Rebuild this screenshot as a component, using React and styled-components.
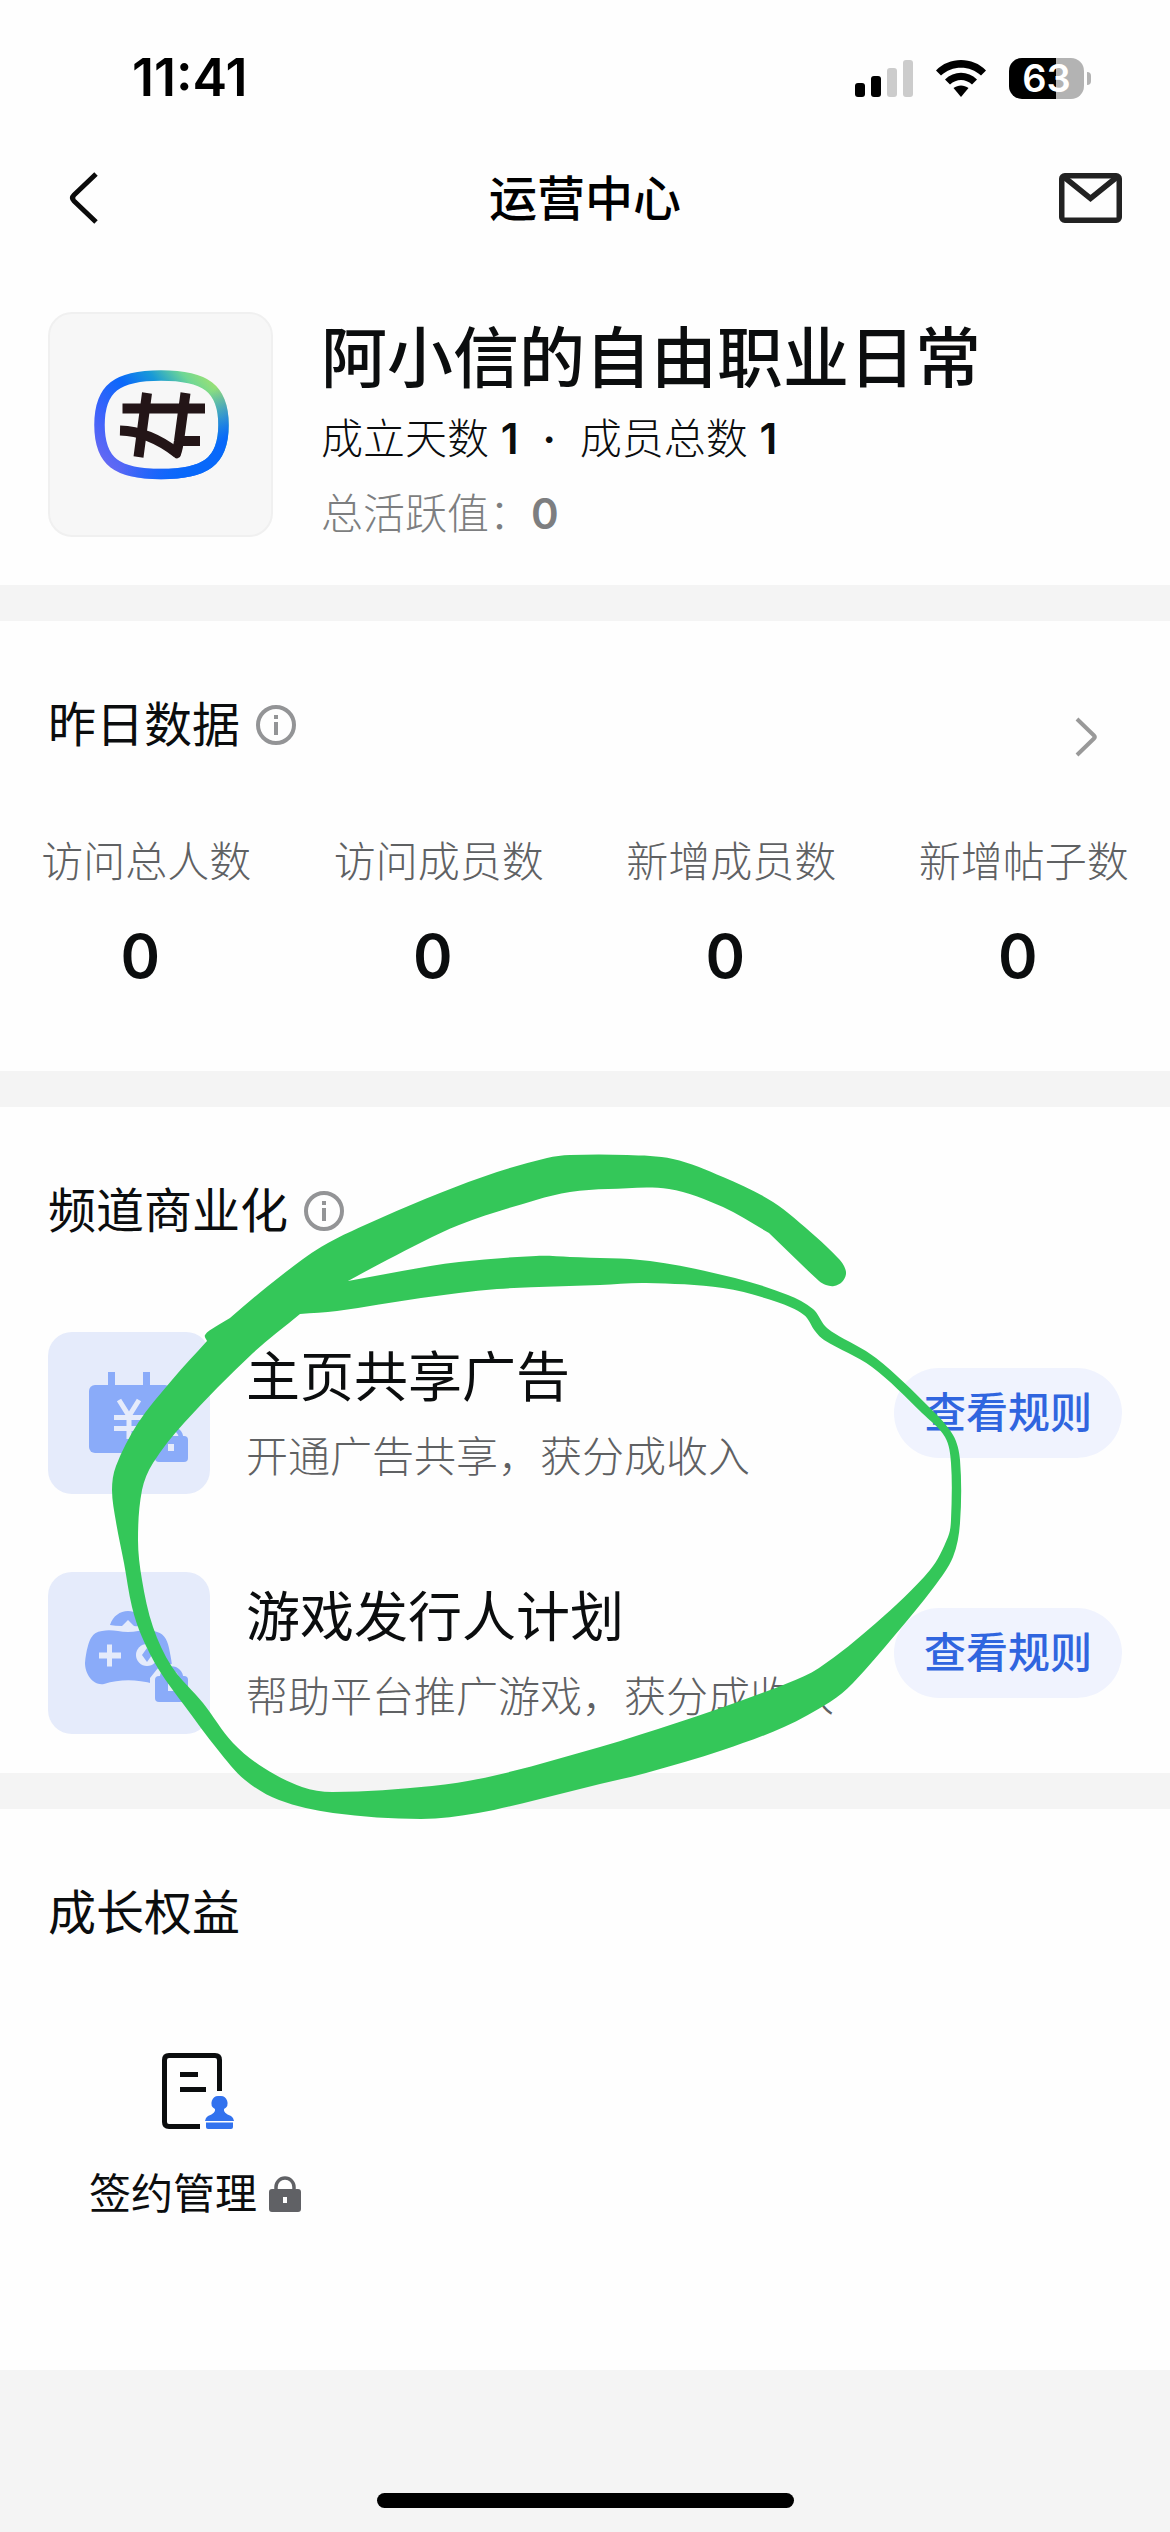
import React from "react";
import styled, { createGlobalStyle } from "styled-components";

const GlobalStyle = createGlobalStyle`
  *, *::before, *::after { box-sizing: border-box; }
  body {
    margin: 0;
    background: #fefefe;
    color: #0b0d0e;
    font-family: Inter, "Noto Sans CJK SC", sans-serif;
  }
  h1, h2, h3, p, dl, dt, dd, ul { margin: 0; padding: 0; font-weight: inherit; }
  ul { list-style: none; }
  svg { display: block; flex: none; }
  button { border: 0; padding: 0; background: none; font: inherit; color: inherit; cursor: pointer; }
`;

const Page = styled.div`
  display: flex;
  flex-direction: column;
  min-height: 100vh;
`;

const StatusBar = styled.div`
  display: flex;
  align-items: center;
  justify-content: space-between;
  height: 156px;
  padding: 0 79px 0 132px;
`;

const Clock = styled.time`
  font-size: 52px;
  line-height: 60px;
  font-weight: 600;
  color: #000;
`;

const StatusIcons = styled.div`
  display: flex;
  align-items: center;
  gap: 23px;
`;

const Battery = styled.div`
  display: flex;
  align-items: center;
  gap: 3px;
`;

const BatteryBody = styled.div`
  width: 75px;
  height: 41px;
  border-radius: 13px;
  background: linear-gradient(to right, #000 63%, #b3b3b3 63%);
  color: #fff;
  font-size: 38px;
  line-height: 41px;
  font-weight: 600;
  text-align: center;
`;

const BatteryNub = styled.span`
  width: 4px;
  height: 13px;
  border-radius: 0 4px 4px 0;
  background: #b3b3b3;
`;

const NavBar = styled.header`
  display: grid;
  grid-template-columns: 1fr auto 1fr;
  align-items: center;
  height: 86px;
  padding: 0 48px;
`;

const NavTitle = styled.h1`
  font-size: 48px;
  line-height: 60px;
  font-weight: 500;
  color: #000;
`;

const NavButton = styled.button`
  justify-self: ${(p) => (p.$end ? "end" : "start")};
`;

const Profile = styled.section`
  display: flex;
  gap: 48px;
  padding: 70px 48px 47px;
`;

const Avatar = styled.div`
  display: grid;
  place-items: center;
  flex: none;
  width: 225px;
  height: 225px;
  border: 2px solid #f0f0f0;
  border-radius: 24px;
  background: #f7f7f7;
`;

const ProfileText = styled.div`
  display: flex;
  flex-direction: column;
`;

const ProfileName = styled.h2`
  margin-bottom: 11px;
  font-size: 66px;
  line-height: 92px;
  font-weight: 500;
`;

const ProfileLine = styled.p`
  margin-bottom: ${(p) => (p.$muted ? 0 : 27)}px;
  font-size: 42px;
  line-height: 48px;
  font-weight: 300;
  color: ${(p) => (p.$muted ? "#7d7e80" : "#0b0d0e")};

  b { font-weight: 600; }
`;

const Dot = styled.b`
  margin: 0 12px;
`;

const Divider = styled.div`
  height: 36px;
  background: #f4f4f4;
`;

const Section = styled.section`
  position: relative;
  padding: 73px 48px ${(p) => p.$bottom}px;
`;

const SectionHead = styled.div`
  display: flex;
  justify-content: space-between;
`;

const SectionTitle = styled.h2`
  display: flex;
  align-items: center;
  align-self: flex-start;
  gap: 16px;
  font-size: 48px;
  line-height: 62px;
  font-weight: 400;
`;

const MoreButton = styled.button`
  height: 86px;
  padding: 0 23px;
`;

const Stats = styled.dl`
  display: grid;
  grid-template-columns: repeat(4, 1fr);
  margin: 52px -48px 0;
  text-align: center;
`;

const Stat = styled.div`
  display: flex;
  flex-direction: column;
  gap: 28px;

  dt { font-size: 42px; line-height: 60px; font-weight: 300; color: #5f6163; }
  dd { font-size: 60px; line-height: 72px; font-weight: 600; padding-right: 12px; }
`;

const ProgramList = styled.ul`
  display: flex;
  flex-direction: column;
  gap: 78px;
  padding-top: 90px;
`;

const ProgramRow = styled.li`
  display: flex;
  align-items: center;
`;

const IconTile = styled.div`
  flex: none;
  border-radius: 24px;
  background: #e5ebfb;
`;

const ProgramText = styled.div`
  flex: 1;
  padding-left: 36px;
`;

const ProgramName = styled.h3`
  margin-bottom: 10px;
  font-size: 54px;
  line-height: 78px;
  font-weight: 400;
`;

const ProgramNote = styled.p`
  font-size: 42px;
  line-height: 60px;
  font-weight: 300;
  color: #5f6163;
`;

const RuleButton = styled.button`
  width: 228px;
  height: 90px;
  border-radius: 45px;
  background: #f0f3fe;
  color: #3065df;
  font-size: 42px;
  line-height: 90px;
  font-weight: 500;
`;

const Benefit = styled.button`
  display: flex;
  flex-direction: column;
  align-items: center;
  gap: 35px;
  width: 294px;
  margin-top: 109px;
`;

const BenefitLabel = styled.span`
  display: flex;
  align-items: center;
  gap: 12px;
  font-size: 42px;
  line-height: 60px;
  font-weight: 400;
`;

const Footer = styled.footer`
  display: flex;
  flex: 1;
  align-items: flex-end;
  justify-content: center;
  min-height: 162px;
  padding-bottom: 24px;
  background: #f4f4f4;
`;

const HomeIndicator = styled.span`
  width: 417px;
  height: 15px;
  border-radius: 8px;
  background: #000;
`;

const Marker = styled.svg`
  position: absolute;
  z-index: 1;
  top: 0;
  left: 0;
  width: 100%;
  height: auto;
  overflow: visible;
  pointer-events: none;
`;

/* Unit direction from p to q. */
const direction = (p, q) => {
  const length = Math.hypot(q[0] - p[0], q[1] - p[1]) || 1;
  return [(q[0] - p[0]) / length, (q[1] - p[1]) / length];
};

/* Smooth curve through the points, without the leading move command. */
const curve = (pts) =>
  pts
    .slice(1)
    .map((end, i) => {
      const start = pts[i];
      const out = direction(pts[Math.max(i - 1, 0)], end);
      const into = direction(start, pts[Math.min(i + 2, pts.length - 1)]);
      const reach = Math.hypot(end[0] - start[0], end[1] - start[1]) / 3;
      return `C${start[0] + out[0] * reach} ${start[1] + out[1] * reach} ${end[0] - into[0] * reach} ${end[1] - into[1] * reach} ${end[0]} ${end[1]}`;
    })
    .join("");

const closed = (...runs) => `M${runs[0][0].join(" ")}${runs.map(curve).join("")}Z`;

const strokeOutside = [
  [769, 1233], [819, 1281], [826, 1285], [834, 1286], [842, 1282], [846, 1274], [844, 1266], [838, 1258],
  [815, 1236], [773, 1202], [723, 1177], [673, 1159], [627, 1155], [570, 1155],
  [547, 1158], [497, 1172], [440, 1193], [383, 1217], [321, 1247], [268, 1286], [230, 1318],
];
const strokeNib = [[230, 1318], [215, 1327], [205, 1335], [207, 1341]];
const strokeRound = [
  [207, 1341], [172, 1380], [138, 1423], [116, 1466], [112, 1490], [116, 1522], [124, 1563],
  [132, 1607], [142, 1637], [159, 1670], [184, 1705], [218, 1750], [245, 1780], [279, 1800], [333, 1813],
  [421, 1819], [478, 1813], [536, 1800], [600, 1784], [646, 1773], [723, 1750], [784, 1727], [830, 1702],
  [853, 1683], [895, 1635], [934, 1587], [953, 1557], [960, 1523], [960, 1460], [953, 1435], [930, 1408],
  [876, 1358], [834, 1333], [825, 1326], [813, 1309], [788, 1295], [735, 1278], [650, 1261], [570, 1257],
  [536, 1256], [459, 1262], [402, 1271], [348, 1281],
];
const strokeNotch = [
  [348, 1281], [387, 1260], [459, 1225], [536, 1200], [570, 1192], [608, 1189], [669, 1189], [723, 1207],
  [769, 1233],
];
const strokeInside = [
  [300, 1314], [337, 1311], [421, 1298], [497, 1289], [600, 1285], [646, 1283], [723, 1288], [777, 1302],
  [804, 1315], [815, 1331], [824, 1340], [872, 1367], [922, 1413], [945, 1437], [951, 1463], [951, 1520],
  [948, 1537], [930, 1570], [876, 1623], [819, 1668], [788, 1683], [715, 1710], [639, 1735], [600, 1747],
  [497, 1775], [432, 1786], [333, 1792], [302, 1787], [264, 1768], [233, 1743], [203, 1703], [172, 1667],
  [153, 1627], [142, 1580], [138, 1540], [142, 1490], [153, 1463], [184, 1423], [253, 1353], [300, 1314],
];

const markerPath =
  closed(strokeOutside, strokeNib, strokeRound, strokeNotch) + closed(strokeInside);

const HandCircle = () => (
  <Marker viewBox="0 1107 1170 666" aria-hidden="true">
    <path d={markerPath} fill="#34c759" fillRule="evenodd" />
  </Marker>
);

const SignalIcon = () => (
  <svg width="58" height="37" viewBox="0 0 58 37">
    <rect x="0" y="23" width="10" height="14" rx="3" />
    <rect x="16" y="16" width="10" height="21" rx="3" />
    <rect x="32" y="8" width="10" height="29" rx="3" fill="#ccc" />
    <rect x="48" y="0" width="10" height="37" rx="3" fill="#ccc" />
  </svg>
);

const WifiIcon = () => (
  <svg width="50" height="37" viewBox="0 0 50 37">
    <path d="M0 10.500C13-3.500 37-3.500 50 10.500L45 15.500C34 5 16 5 5 15.500Z" />
    <path d="M9 19.500C18 10.500 32 10.500 41 19.500L36 24.500C29.500 18.500 20.500 18.500 14 24.500Z" />
    <path d="M17.500 28C22 24.500 28 24.500 32.500 28L25 37Z" />
  </svg>
);

const BackIcon = () => (
  <svg width="72" height="60" viewBox="48 169 72 60" fill="none" stroke="#0b0b0b" strokeWidth="5">
    <path d="M96 174L74 195Q71 198 74 201L96 222" />
  </svg>
);

const MailIcon = () => (
  <svg width="63" height="52" viewBox="0 0 63 52" fill="none" stroke="#222" strokeWidth="5.500">
    <rect x="2.750" y="2.750" width="57.500" height="44.500" rx="3" />
    <path d="M5 4L31.500 25.500L58 4" />
  </svg>
);

const ChannelLogo = () => (
  <svg width="136" height="112" viewBox="92 368 136 112">
    <defs>
      <linearGradient id="ring" x1="105" y1="470" x2="212" y2="374" gradientUnits="userSpaceOnUse">
        <stop offset="0" stopColor="#6a6af2" />
        <stop offset=".25" stopColor="#3a62fb" />
        <stop offset=".5" stopColor="#0a68fa" />
        <stop offset=".68" stopColor="#1899d8" />
        <stop offset=".85" stopColor="#6fd795" />
        <stop offset="1" stopColor="#a4e36c" />
      </linearGradient>
      <linearGradient id="shade" x1="170" y1="424" x2="212" y2="474" gradientUnits="userSpaceOnUse">
        <stop offset="0" stopColor="#0868fa" stopOpacity="0" />
        <stop offset=".7" stopColor="#0868fa" />
      </linearGradient>
    </defs>
    {["#ring", "#shade"].map((id) => (
      <path
        key={id}
        d="M160 374.500C204 374.500 222.500 387 222.500 424S204 473 160 473S98.500 461 98.500 424S116 374.500 160 374.500Z"
        fill="none"
        stroke={`url(${id})`}
        strokeWidth="10.500"
      />
    ))}
    <g fill="none" stroke="#231517" strokeWidth="10">
      <path d="M146 392L137.500 456M184.500 392L178 440Q176 452 175 453M121.500 407.500H204M180 440H199" />
      <path d="M119 429.500C140 430 158 438 176 452" />
    </g>
    <path d="M168 449L174 457Q179 459 180 451L181 440Z" fill="#231517" />
  </svg>
);

const InfoIcon = () => (
  <svg width="40" height="40" viewBox="0 0 40 40" aria-label="说明">
    <circle cx="20" cy="20" r="18" fill="none" stroke="#939496" strokeWidth="4" />
    <path d="M18 10h4v4h-4zM18 17h4v13h-4z" fill="#939496" />
  </svg>
);

const MoreIcon = () => (
  <svg width="24" height="40" viewBox="0 0 24 40" fill="none" stroke="#999" strokeWidth="4">
    <path d="M2 2L19 18.500Q20.500 20 19 21.500L2 38" />
  </svg>
);

const TileLock = () => (
  <>
    <path d="M106 101Q110 93 123 92Q136 93 139 101L146 106V136H102V106Z" fill="#e5ebfb" />
    <path d="M114 108V106A9.500 9.500 0 0 1 133 106V108" fill="none" stroke="#8aabf9" strokeWidth="4.500" />
    <rect x="107" y="104" width="33" height="26" rx="4" />
    <path d="M120 112h6v7h-6z" fill="#e5ebfb" />
  </>
);

const AdIcon = () => (
  <svg width="162" height="162" viewBox="0 0 162 162" fill="#8aabf9">
    <path d="M60 40h7v16h-7zM95 40h7v16h-7z" />
    <rect x="41" y="53" width="82" height="68" rx="6" />
    <path d="M71 68L81 84L91 68M66 85.500H96M66 96.500H96M81 84V107" fill="none" stroke="#e5ebfb" strokeWidth="5" />
    <TileLock />
  </svg>
);

const GameIcon = () => (
  <svg width="162" height="162" viewBox="0 0 162 162" fill="#8aabf9">
    <path d="M62 53C65 44 72 39 80 39S95 44 98 53Q91 55 86 54L80 48L74 54Q67 54 62 53Z" />
    <path d="M54 59C64 57 70 60 80 60S96 57 106 59C115 61 119 66 121 76C123 87 126 97 122 105C118 113 112 114 106 112C88 107 72 107 56 112C46 114 37 103 37 91C38 79 41 69 43 66Q46 60 54 59Z" />
    <path d="M51 80.500h8v-8h5v8h9v6h-9v8h-5v-8h-8z" fill="#e5ebfb" />
    <circle cx="99" cy="83" r="11" fill="#e5ebfb" />
    <path d="M99 76l5 7-5 7-5-7z" />
    <TileLock />
  </svg>
);

const ContractIcon = () => (
  <svg width="78" height="76" viewBox="156 2053 78 76">
    <path
      d="M219.500 2091V2060Q219.500 2055.500 215 2055.500H169Q164.500 2055.500 164.500 2060V2122Q164.500 2126.500 169 2126.500H200M180 2074.500H198M180 2089.500H206"
      fill="none"
      stroke="#0b0d0e"
      strokeWidth="5"
    />
    <path d="M219.500 2096A7 7 0 0 1 224 2109Q223 2113 231 2116Q234 2118 234 2121H205Q205 2118 208 2116Q216 2113 215 2109A7 7 0 0 1 219.500 2096Z" fill="#3272ee" />
    <path d="M206 2122.500H233V2127Q233 2129 231 2129H208Q206 2129 206 2127Z" fill="#3272ee" />
  </svg>
);

const LockIcon = () => (
  <svg width="32" height="36" viewBox="0 0 32 36" fill="#606165">
    <path d="M7 16V11A9 9 0 0 1 25 11V16" fill="none" stroke="#606165" strokeWidth="3.500" />
    <path fillRule="evenodd" d="M3 13H29Q32 13 32 16V33Q32 36 29 36H3Q0 36 0 33V16Q0 13 3 13ZM14 21V27H18V21Z" />
  </svg>
);

const stats = ["访问总人数", "访问成员数", "新增成员数", "新增帖子数"];

const programs = [
  { name: "主页共享广告", note: "开通广告共享，获分成收入", Icon: AdIcon },
  { name: "游戏发行人计划", note: "帮助平台推广游戏，获分成收入", Icon: GameIcon },
];

export default function App() {
  return (
    <Page>
      <GlobalStyle />
      <StatusBar>
        <Clock>11:41</Clock>
        <StatusIcons>
          <SignalIcon />
          <WifiIcon />
          <Battery>
            <BatteryBody>63</BatteryBody>
            <BatteryNub />
          </Battery>
        </StatusIcons>
      </StatusBar>

      <NavBar>
        <NavButton aria-label="返回"><BackIcon /></NavButton>
        <NavTitle>运营中心</NavTitle>
        <NavButton $end aria-label="消息"><MailIcon /></NavButton>
      </NavBar>

      <Profile>
        <Avatar><ChannelLogo /></Avatar>
        <ProfileText>
          <ProfileName>阿小信的自由职业日常</ProfileName>
          <ProfileLine>成立天数 <b>1</b> <Dot>·</Dot> 成员总数 <b>1</b></ProfileLine>
          <ProfileLine $muted>总活跃值：<b>0</b></ProfileLine>
        </ProfileText>
      </Profile>

      <Divider />

      <Section $bottom={79}>
        <SectionHead>
          <SectionTitle>昨日数据 <InfoIcon /></SectionTitle>
          <MoreButton aria-label="更多数据"><MoreIcon /></MoreButton>
        </SectionHead>
        <Stats>
          {stats.map((label) => (
            <Stat key={label}>
              <dt>{label}</dt>
              <dd>0</dd>
            </Stat>
          ))}
        </Stats>
      </Section>

      <Divider />

      <Section $bottom={39}>
        <SectionTitle>频道商业化 <InfoIcon /></SectionTitle>
        <ProgramList>
          {programs.map(({ name, note, Icon }) => (
            <ProgramRow key={name}>
              <IconTile><Icon /></IconTile>
              <ProgramText>
                <ProgramName>{name}</ProgramName>
                <ProgramNote>{note}</ProgramNote>
              </ProgramText>
              <RuleButton>查看规则</RuleButton>
            </ProgramRow>
          ))}
        </ProgramList>
        <HandCircle />
      </Section>

      <Divider />

      <Section $bottom={146}>
        <SectionTitle>成长权益</SectionTitle>
        <Benefit>
          <ContractIcon />
          <BenefitLabel>签约管理 <LockIcon /></BenefitLabel>
        </Benefit>
      </Section>

      <Footer>
        <HomeIndicator />
      </Footer>
    </Page>
  );
}
